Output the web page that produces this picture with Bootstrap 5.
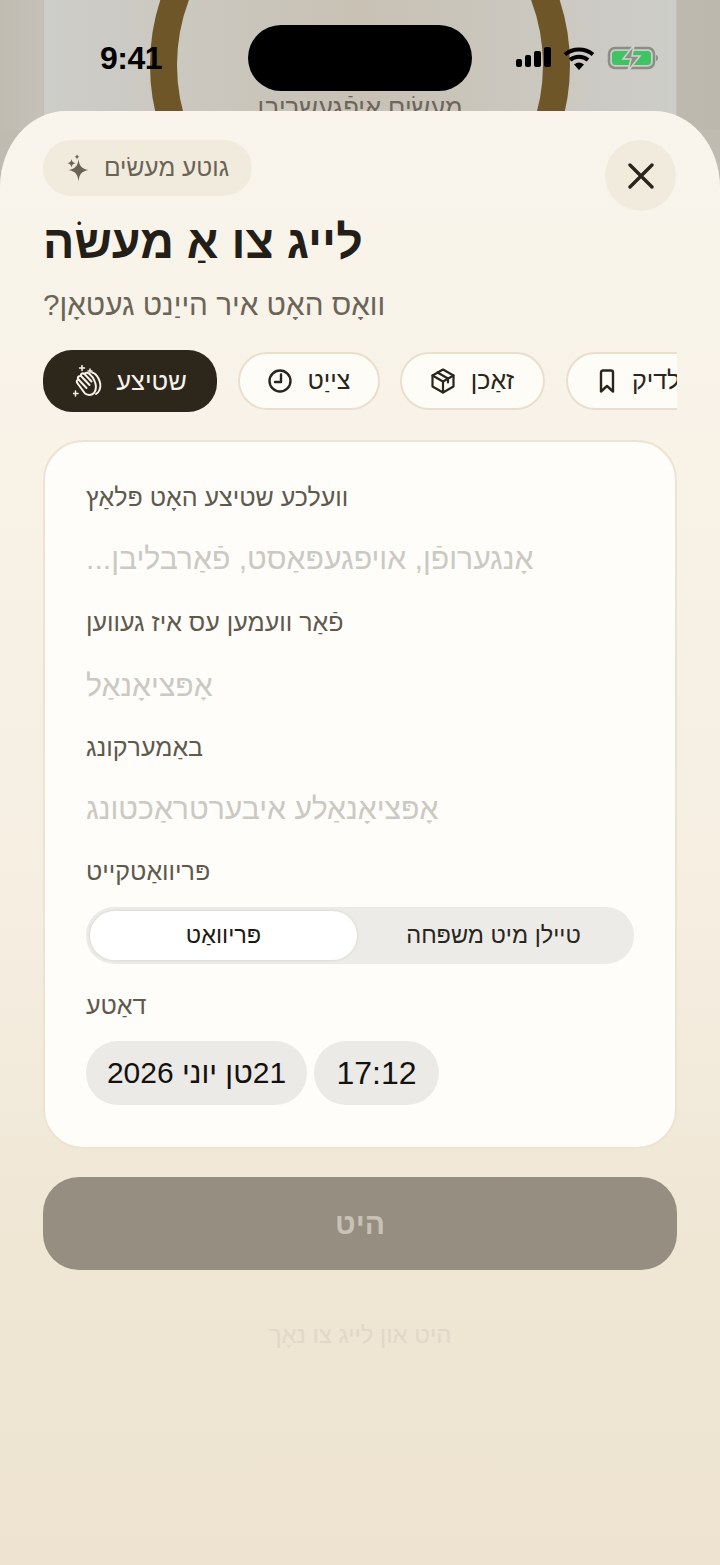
<!DOCTYPE html>
<html lang="yi">
<head>
    <meta charset="UTF-8">
    <meta name="viewport" content="width=device-width, initial-scale=1.0">
    <title>לייג צו אַ מעשׂה</title>
    <link href="https://cdn.jsdelivr.net/npm/bootstrap@5.3.0/dist/css/bootstrap.min.css" rel="stylesheet">
    <style>
        html, body { margin: 0; height: 100%; }
        body { font-family: "Liberation Sans", "DejaVu Sans", sans-serif; background: #bfbbb1; width: 720px; height: 1565px; overflow: hidden; position: relative; }
        .yd { direction: rtl; text-align: left; unicode-bidi: isolate; }

        /* screen behind the sheet */
        .backdrop { position: absolute; top: 0; left: 0; width: 720px; height: 130px; background: linear-gradient(90deg, #c0bcb2, #c5c1b8 6%, #bcb8ae); overflow: hidden; }
        .backdrop-panel { position: absolute; left: 43px; top: 0; width: 634px; height: 130px; background: linear-gradient(90deg, #cdcdc9, #c8c1b4 50%, #cdcdc9); border-left: 1px solid #c6bfb0; border-right: 1px solid #c6bfb0; }
        .backdrop-ring { position: absolute; left: 150px; top: -145px; width: 420px; height: 420px; border-radius: 50%; border: 27px solid #6f5628; }
        .backdrop-text { position: absolute; left: 0; width: 720px; top: 93px; text-align: center; font-size: 25.6px; line-height: 28px; color: #6c665b; direction: rtl; }

        .status-bar { position: absolute; top: 25px; left: 0; width: 720px; height: 66px; z-index: 3; }
        .status-time { position: absolute; left: 100px; top: 14px; font-size: 32px; line-height: 38px; font-weight: 700; color: #000; letter-spacing: -.5px; }
        .island { position: absolute; left: 248px; top: 0; width: 224px; height: 66px; border-radius: 33px; background: #000; }
        .status-icons { position: absolute; left: 516px; top: 20px; }

        .sheet { position: absolute; top: 111px; left: 0; width: 720px; height: 1454px; padding: 29px 43px 0; border-radius: 66px 66px 0 0 / 76px 76px 0 0; background: linear-gradient(180deg, #f9f5ec 0, #f8f2e7 25%, #f5eee1 55%, #efe6d4 78%, #ede3d0 100%); z-index: 2; }

        .top-row { height: 71px; }
        .sheet-chip { height: 56px; width: 209px; border-radius: 28px; background: #f1ebdd; color: #6a6356; font-size: 24.5px; padding: 0 23px 0 23px; }
        .close-btn { width: 71px; height: 71px; border-radius: 50%; background: #f1ebde; border: 0; padding: 0; margin-right: 1px; }
        .sheet-title { font-size: 46.500px; line-height: 56px; font-weight: 700; color: #231f18; margin: 0; margin-top: 3px; }
        .sheet-sub { font-size: 29.700px; line-height: 40px; color: #6b6458; margin-top: 15px; }

        .pill-row { gap: 20px; margin-top: 25px; height: 62px; overflow: hidden; }
        .type-pill { flex: 0 0 auto; height: 58px; margin-top: 2px; border-radius: 29px; background: #fefcf7; border: 2px solid #eadfce; color: #2a251c; font-size: 25px; padding: 0; gap: 16px; }
        .type-pill:nth-child(2) { width: 142px; margin-left: 1px; }
        .type-pill:nth-child(3) { width: 145px; }
        .type-pill:nth-child(4) { width: 170px; margin-left: 1px; justify-content: flex-start !important; padding-left: 31px; gap: 17px; }
        .type-pill-on { height: 62px; width: 174px; margin-top: 0; border: 0; background: #2d261b; color: #f7f3ea; font-size: 25.5px; gap: 13px; }

        .form-box { margin-top: 28px; height: 709px; border: 2px solid #eee2d2; border-radius: 40px; background: #fefdf9; padding: 40px 41px 0; }
        .field-label { font-size: 25px; line-height: 30px; color: #5f594e; }
        .field-hint { font-size: 30.200px; line-height: 38px; color: #cbc9c4; }
        .seg-wrap { height: 57px; border-radius: 28px; background: #ecebe8; padding: 4px; margin-top: 21px; }
        .seg-item { flex: 1 1 0; font-size: 23.500px; line-height: 49px; color: #2a2620; text-align: center; direction: rtl; }
        .seg-on { flex: 0 0 267px; background: #fff; border-radius: 25px; color: #1c1914; box-shadow: 0 0 3px rgba(0, 0, 0, .12); }
        .date-chip { height: 64px; border-radius: 32px; background: #ebeae7; font-size: 30px; line-height: 64px; color: #14120e; direction: rtl; text-align: center; }
        .date-time { font-size: 32px; }

        .save-btn { display: block; width: 634px; height: 93px; margin-top: 28px; border: 0; border-radius: 36px; background: #968e80; color: #c7c1b6; font-size: 30px; font-weight: 700; }
        .save-more { margin-top: 50px; text-align: center; font-size: 24px; line-height: 30px; color: #e1d8c8; direction: rtl; }
    </style>
</head>
<body>
    <div class="backdrop">
        <div class="backdrop-panel"></div>
        <div class="backdrop-ring"></div>
        <div class="backdrop-text">מעשׂים איפֿגעשריבן</div>
    </div>

    <div class="status-bar">
        <div class="status-time">9:41</div>
        <div class="island"></div>
        <svg class="status-icons" width="142" height="28" viewBox="0 0 142 28">
            <rect x="0" y="14" width="6" height="8" rx="2" fill="#000"/>
            <rect x="9" y="10" width="6" height="12" rx="2" fill="#000"/>
            <rect x="18" y="6" width="7" height="16" rx="2" fill="#000"/>
            <rect x="28" y="2" width="7" height="20" rx="2" fill="#000"/>
            <path d="M49 9.500a22 22 0 0 1 28 0" fill="none" stroke="#000" stroke-width="4"/>
            <path d="M54 15a14 14 0 0 1 18 0" fill="none" stroke="#000" stroke-width="4"/>
            <path d="M58 19.500a8 8 0 0 1 10 0L63 25z" fill="#000"/>
            <rect x="93" y="3" width="45" height="20" rx="6" fill="none" stroke="#8d8d88" stroke-width="2.500"/>
            <rect x="96" y="6" width="39" height="14" rx="3.500" fill="#3ec463"/>
            <path d="M140 10v6c1.500-.5 2-1.800 2-3s-.5-2.500-2-3z" fill="#8d8d88"/>
            <path d="M118 0l-11 14h8l-3 12 12-15h-8z" fill="#8f8f8a" stroke="#d2d2cc" stroke-width="1.500"/>
        </svg>
    </div>

    <main class="sheet">
        <div class="top-row d-flex justify-content-between align-items-start">
            <div class="sheet-chip d-flex align-items-center justify-content-between">
                <svg width="24" height="28" viewBox="0 0 24 28" fill="#6a6356">
                    <path d="M12.500 5c.8 7 3 9.500 10 11-7 1.500-9.200 4-10 11.500-.8-7.500-3-10-10-11.500 7-1.500 9.200-4 10-11z"/>
                    <path d="M5.500 5c.4 2.500 1.200 3.500 4 4.200-2.800.7-3.600 1.700-4 4.300-.4-2.600-1.200-3.600-4-4.300 2.800-.7 3.600-1.700 4-4.200z"/>
                    <path d="M11 0c.3 1.700.8 2.300 2.500 2.800-1.700.5-2.200 1.100-2.500 2.800-.3-1.700-.8-2.300-2.500-2.800 1.700-.5 2.200-1.100 2.500-2.800z"/>
                </svg>
                <span class="yd">גוטע מעשׂים</span>
            </div>
            <button class="close-btn d-flex align-items-center justify-content-center" type="button" aria-label="close">
                <svg width="26" height="26" viewBox="0 0 26 26"><path d="M2 2l22 22M24 2L2 24" stroke="#2a251c" stroke-width="3.400" stroke-linecap="round"/></svg>
            </button>
        </div>

        <h1 class="sheet-title yd">לייג צו אַ מעשׂה</h1>
        <div class="sheet-sub yd">וואָס האָט איר הייַנט געטאָן?</div>

        <div class="pill-row d-flex">
            <button class="btn type-pill type-pill-on d-flex align-items-center justify-content-center" type="button">
                <svg width="30" height="32" viewBox="0 0 30 32" fill="none" stroke="#f7f3ea" stroke-linecap="round" stroke-linejoin="round">
                    <!-- back hand -->
                    <path d="M19 7.500c3 .5 5 3 6.500 6 2 4 2.500 8 1 11.500-.8 2-2 3-3.500 4" stroke-width="2"/>
                    <!-- front hand with fingers -->
                    <path d="M5 19c-2-2-1.500-4 .5-4.500-1.500-2 0-4 2.500-3.500-.5-2 1.500-3.500 3.500-2 1-2 3.500-1.500 5 0 2.500 2 4.500 4.500 5.500 8 1.300 4 1.300 8-1 11-2.500 2.500-6 2.500-9 .5z" stroke-width="2"/>
                    <path d="M5.500 14.500l8 8.500M8 11l8.500 9M11.500 9l7 7.500" stroke-width="2"/>
                    <!-- sparkles -->
                    <path d="M9 .5v5M6.500 3h5M17 4v4M15 6h4M2.500 26v5M0 28.500h5" stroke-width="1.500"/>
                </svg>
                <span class="yd">שטיצע</span>
            </button>
            <button class="btn type-pill d-flex align-items-center justify-content-center" type="button">
                <svg width="24" height="24" viewBox="0 0 24 24" fill="none" stroke="#2a251c" stroke-width="2.400" stroke-linecap="round" stroke-linejoin="round"><circle cx="12" cy="12" r="10.500"/><path d="M13 5.500V13H7"/></svg>
                <span class="yd">צייַט</span>
            </button>
            <button class="btn type-pill d-flex align-items-center justify-content-center" type="button">
                <svg width="24" height="26" viewBox="0 0 24 26" fill="none" stroke="#2a251c" stroke-width="2.200" stroke-linejoin="round" stroke-linecap="round"><path d="M12 1.500l10.500 6v11L12 24.500l-10.500-6v-11z"/><path d="M1.500 7.500L12 13.500l10.500-6M12 13.500v11M6.500 4.500l10.500 6v4"/></svg>
                <span class="yd">זאַכן</span>
            </button>
            <button class="btn type-pill d-flex align-items-center" type="button">
                <svg width="16" height="24" viewBox="0 0 16 24" fill="none" stroke="#2a251c" stroke-width="2.400" stroke-linejoin="round" class="flex-shrink-0"><path d="M2 3.500c0-1.300.7-2 2-2h8c1.300 0 2 .7 2 2v19l-6-5.500-6 5.500z"/></svg>
                <span class="yd text-nowrap">געדולדיק</span>
            </button>
        </div>

        <div class="form-box">
            <div class="field-label yd">וועלכע שטיצע האָט פּלאַץ</div>
            <div class="field-hint yd" style="margin-top:28px">אָנגערופֿן, אויפגעפּאַסט, פֿאַרבליבן...</div>
            <div class="field-label yd" style="margin-top:29px">פֿאַר וועמען עס איז געווען</div>
            <div class="field-hint yd" style="margin-top:30px">אָפּציאָנאַל</div>
            <div class="field-label yd" style="margin-top:27px">באַמערקונג</div>
            <div class="field-hint yd" style="margin-top:28px">אָפּציאָנאַלע איבערטראַכטונג</div>
            <div class="field-label yd" style="margin-top:28px">פּריוואַטקייט</div>
            <div class="seg-wrap d-flex">
                <div class="seg-item seg-on">פּריוואַט</div>
                <div class="seg-item">טיילן מיט משפּחה</div>
            </div>
            <div class="field-label yd" style="margin-top:26px">דאַטע</div>
            <div class="d-flex" style="gap:7px;margin-top:21px">
                <div class="date-chip" style="width:221px">21טן יוני 2026</div>
                <div class="date-chip date-time" style="width:125px">17:12</div>
            </div>
        </div>

        <button class="save-btn" type="button">היט</button>
        <div class="save-more">היט און לייג צו נאָך</div>
    </main>

    <script src="https://cdn.jsdelivr.net/npm/bootstrap@5.3.0/dist/js/bootstrap.bundle.min.js"></script>
</body>
</html>
